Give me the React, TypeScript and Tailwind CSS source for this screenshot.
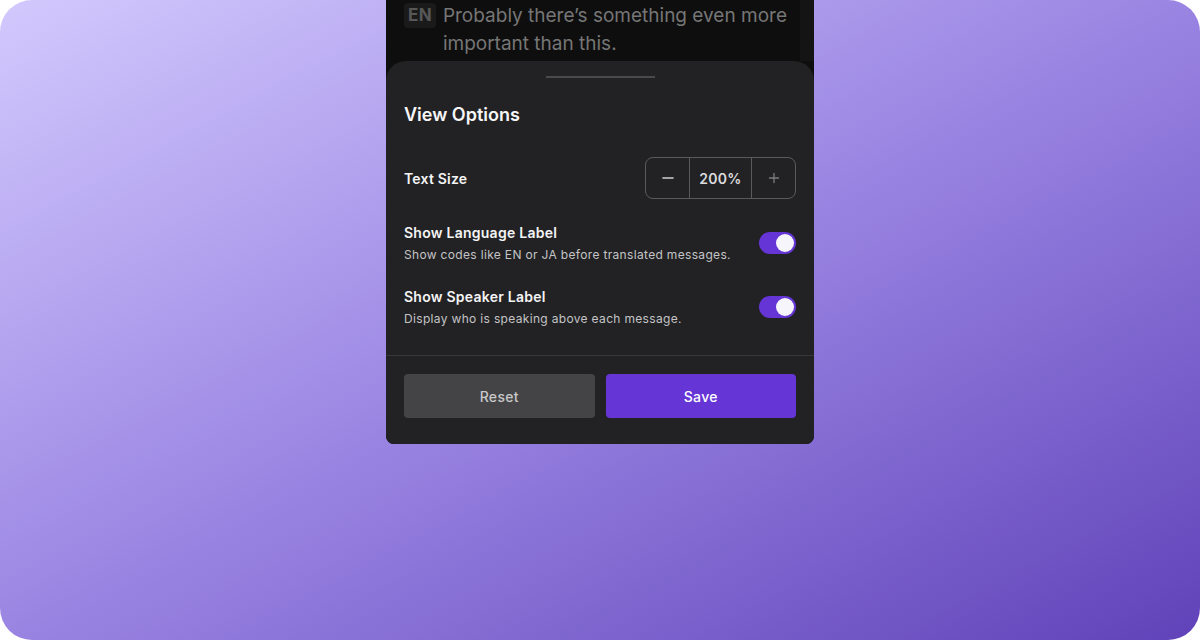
import { useState } from 'react'

function Toggle({ on, onChange }: { on: boolean; onChange: (v: boolean) => void }) {
  return (
    <button
      type="button"
      onClick={() => onChange(!on)}
      className={`flex h-[22px] w-[37px] shrink-0 items-center rounded-full px-[2px] ${
        on ? 'justify-end bg-[#6535d6]' : 'justify-start bg-[#48484a]'
      }`}
    >
      <span className="h-[18px] w-[18px] rounded-full bg-[#f7f5fc]" />
    </button>
  )
}

function ToggleRow({
  title,
  desc,
  on,
  onChange,
}: {
  title: string
  desc: string
  on: boolean
  onChange: (v: boolean) => void
}) {
  return (
    <div className="flex items-center justify-between">
      <div>
        <p className="text-[14px] leading-[20px] font-semibold tracking-[0.25px] text-[#f4f4f5]">{title}</p>
        <p className="mt-[4px] text-[12px] leading-[16px] tracking-[0.33px] text-[#c4c4c6]">{desc}</p>
      </div>
      <Toggle on={on} onChange={onChange} />
    </div>
  )
}

export default function App() {
  const [size, setSize] = useState(200)
  const [langLabel, setLangLabel] = useState(true)
  const [speakerLabel, setSpeakerLabel] = useState(true)

  return (
    <div className="h-[640px] w-[1200px] overflow-hidden rounded-[32px] bg-linear-to-br from-[#d3c9fd] via-[#9a84e2] to-[#6142b9] font-['Inter',sans-serif]">
      <div className="mx-auto flex h-[444px] w-[428px] flex-col overflow-hidden rounded-b-[8px] bg-[#0e0e0e]">
        {/* transcript behind the sheet */}
        <div className="flex h-[61px] shrink-0">
          <div className="flex flex-1 gap-[7px] pt-[2px] pl-[18px]">
            <span className="mt-[1px] h-[25px] shrink-0 rounded-[4px] bg-[#1a1a1a] px-[4px] text-[17px] leading-[25px] font-bold tracking-[0.3px] text-[#575757]">
              EN
            </span>
            <p className="text-[19px] leading-[28px] text-[#767676]">
              Probably there’s something even more important than this.
            </p>
          </div>
          <div className="w-[14px] shrink-0 bg-[#141414]" />
        </div>

        {/* view options sheet */}
        <div className="flex flex-1 flex-col rounded-t-[20px] bg-[#222224]">
          <div className="mx-auto mt-[15px] h-[2px] w-[109px] bg-[#4a4a4c]" />
          <div className="px-[18px]">
            <h2 className="mt-[23px] text-[18px] leading-[28px] font-semibold text-[#f6f6f7]">View Options</h2>

            <div className="mt-[28px] flex items-center justify-between">
              <span className="text-[14px] font-semibold tracking-[0.2px] text-[#f4f4f5]">Text Size</span>
              <div className="flex h-[42px] items-stretch rounded-[8px] border border-[#5a5a5c]">
                <button
                  type="button"
                  onClick={() => setSize((s) => Math.max(50, s - 10))}
                  className="flex w-[43px] items-center justify-center text-[#d0d0d2]"
                >
                  <svg width="12" height="12" viewBox="0 0 12 12">
                    <path d="M1 6h10" stroke="currentColor" strokeWidth="1.6" strokeLinecap="round" />
                  </svg>
                </button>
                <span className="flex w-[63px] items-center justify-center border-x border-[#5a5a5c] text-[14px] font-semibold tracking-[0.3px] text-[#dcdcde]">
                  {size}%
                </span>
                <button
                  type="button"
                  onClick={() => setSize((s) => Math.min(200, s + 10))}
                  className="flex w-[43px] items-center justify-center text-[#7c7c7e]"
                >
                  <svg width="12" height="12" viewBox="0 0 12 12">
                    <path d="M1.5 6h9M6 1.5v9" stroke="currentColor" strokeWidth="1.3" strokeLinecap="round" />
                  </svg>
                </button>
              </div>
            </div>

            <div className="mt-[24px] flex flex-col gap-[24px]">
              <ToggleRow
                title="Show Language Label"
                desc="Show codes like EN or JA before translated messages."
                on={langLabel}
                onChange={setLangLabel}
              />
              <ToggleRow
                title="Show Speaker Label"
                desc="Display who is speaking above each message."
                on={speakerLabel}
                onChange={setSpeakerLabel}
              />
            </div>
          </div>

          <div className="mt-[28px] border-t border-[#38383a]" />

          <div className="mt-[18px] flex gap-[11px] px-[18px]">
            <button
              type="button"
              onClick={() => setSize(100)}
              className="h-[44px] flex-1 rounded-[4px] bg-[#444446] text-[14px] font-medium tracking-[0.3px] text-[#c8c8ca]"
            >
              Reset
            </button>
            <button
              type="button"
              className="h-[44px] flex-1 rounded-[4px] bg-[#6535d6] text-[14px] font-medium tracking-[0.3px] text-white"
            >
              Save
            </button>
          </div>
        </div>
      </div>
    </div>
  )
}
